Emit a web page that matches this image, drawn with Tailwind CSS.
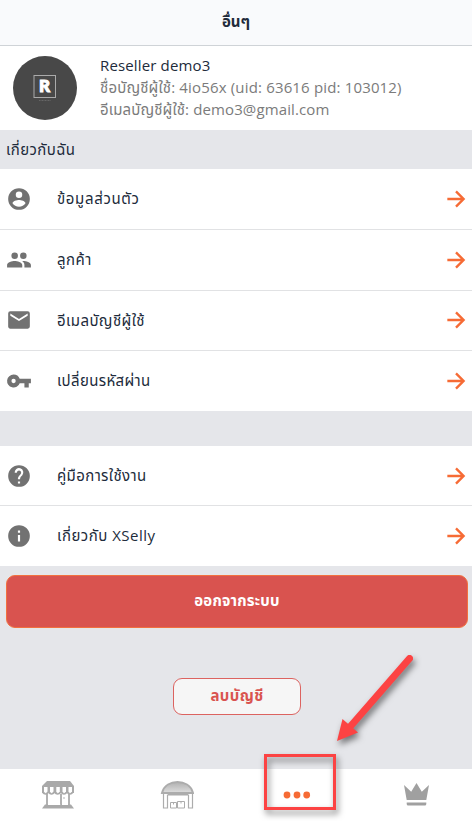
<!DOCTYPE html>
<html lang="th">
<head>
<meta charset="utf-8">
<title>อื่นๆ</title>
<script src="https://cdn.jsdelivr.net/npm/@tailwindcss/browser@4"></script>
</head>
<body class="relative flex h-[821px] w-[472px] flex-col overflow-hidden bg-[#e5e6ea] font-['Open_Sans','Noto_Sans_Thai','Noto_Sans',sans-serif] text-[15px] text-[#212b3b]">
<header class="flex h-[46px] shrink-0 items-center justify-center border-b border-[#cfd3d7] bg-[#f9fafc] pb-[2px] text-[15px] font-bold"><span>อื่นๆ</span></header>

<section class="flex h-[84px] shrink-0 items-center bg-white pl-[13px]">
  <svg class="size-16 shrink-0" viewBox="0 0 64 64"><circle cx="32" cy="32" r="32" fill="#484848"/><rect x="21" y="19.500" width="21.500" height="22" fill="none" stroke="#aaa"/><text x="26" y="36.300" font-family="Lato" font-weight="900" font-size="17" fill="#fff" stroke="#fff" stroke-width="1">R</text><path d="M26 44.500h12" stroke="#666" stroke-dasharray="1 .5"/></svg>
  <div class="ml-[23px] flex flex-col whitespace-nowrap pb-[2px] text-[15px] leading-[22px] text-[#7b7b7b]">
    <span class="tracking-[0.15px] text-[#212b3b]">Reseller demo3</span>
    <span class="tracking-[0.16px]">ชื่อบัญชีผู้ใช้: 4io56x (uid: 63616 pid: 103012)</span>
    <span class="tracking-[0.12px]">อีเมลบัญชีผู้ใช้: demo3@gmail.com</span>
  </div>
</section>

<h2 class="flex h-[39px] shrink-0 items-center pl-[6px] tracking-[0.4px]"><span>เกี่ยวกับฉัน</span></h2>

<ul class="flex h-[242px] shrink-0 flex-col divide-y divide-[#e1e2e4] bg-white">
  <li class="flex flex-1 items-center pl-[6px] pr-[3px]"><svg class="mr-[25px] size-[26px]" viewBox="0 0 24 24" fill="#727272"><path d="M12 2a10 10 0 1 0 0 20 10 10 0 0 0 0-20m0 3a3 3 0 1 1 0 6 3 3 0 0 1 0-6m0 14.200a7.200 7.200 0 0 1-6-3.220c.03-1.990 4-3.080 6-3.080s5.970 1.090 6 3.080a7.200 7.200 0 0 1-6 3.220"/></svg><span class="pb-px tracking-[0.65px]">ข้อมูลส่วนตัว</span><svg class="ml-auto size-[26px]" viewBox="0 0 24 24" fill="none" stroke="#f66b35" stroke-width="2.200"><path d="M4 12h15M12 5l7 7-7 7"/></svg></li>
  <li class="flex flex-1 items-center pl-[6px] pr-[3px]"><svg class="mr-[25px] size-[26px]" viewBox="0 0 24 24" fill="#727272"><path d="M16 11a3 3 0 1 0 0-6 3 3 0 0 0 0 6m-8 0a3 3 0 1 0 0-6 3 3 0 0 0 0 6m0 2c-2.330 0-7 1.170-7 3.500V19h14v-2.500C15 14.170 10.330 13 8 13m8 0c-.29 0-.62.020-.97.050 1.160.84 1.970 1.970 1.970 3.450V19h6v-2.500c0-2.330-4.670-3.500-7-3.500"/></svg><span class="pb-px tracking-[0.5px]">ลูกค้า</span><svg class="ml-auto size-[26px]" viewBox="0 0 24 24" fill="none" stroke="#f66b35" stroke-width="2.200"><path d="M4 12h15M12 5l7 7-7 7"/></svg></li>
  <li class="flex flex-1 items-center pl-[6px] pr-[3px]"><svg class="mr-[25px] size-[26px]" viewBox="0 0 24 24" fill="#727272"><path d="M20 4H4a2 2 0 0 0-2 2v12c0 1.100.9 2 2 2h16a2 2 0 0 0 2-2V6a2 2 0 0 0-2-2m0 4-8 5-8-5V6l8 5 8-5z"/></svg><span class="pb-px tracking-[0.4px]">อีเมลบัญชีผู้ใช้</span><svg class="ml-auto size-[26px]" viewBox="0 0 24 24" fill="none" stroke="#f66b35" stroke-width="2.200"><path d="M4 12h15M12 5l7 7-7 7"/></svg></li>
  <li class="flex flex-1 items-center pl-[6px] pr-[3px]"><svg class="mr-[25px] size-[26px]" viewBox="0 0 24 24" fill="#727272"><path d="M12.650 10A6 6 0 0 0 7 6a6 6 0 1 0 5.650 8H17v4h4v-4h2v-4zM7 14a2 2 0 1 1 0-4 2 2 0 0 1 0 4"/></svg><span class="pb-px tracking-[0.35px]">เปลี่ยนรหัสผ่าน</span><svg class="ml-auto size-[26px]" viewBox="0 0 24 24" fill="none" stroke="#f66b35" stroke-width="2.200"><path d="M4 12h15M12 5l7 7-7 7"/></svg></li>
</ul>

<ul class="mt-[35px] flex h-[120px] shrink-0 flex-col bg-white">
  <li class="flex h-[60px] items-center border-b border-[#e1e2e4] pl-[6px] pr-[3px]"><svg class="mr-[25px] size-[26px]" viewBox="0 0 24 24" fill="#727272"><path d="M12 2a10 10 0 1 0 0 20 10 10 0 0 0 0-20m1 17h-2v-2h2zm2.070-7.750-.9.920C13.450 12.900 13 13.500 13 15h-2v-.5c0-1.100.45-2.100 1.170-2.830l1.240-1.260A2 2 0 1 0 10 9H8a4 4 0 1 1 7.070 2.250"/></svg><span class="pb-px tracking-[0.4px]">คู่มือการใช้งาน</span><svg class="ml-auto size-[26px]" viewBox="0 0 24 24" fill="none" stroke="#f66b35" stroke-width="2.200"><path d="M4 12h15M12 5l7 7-7 7"/></svg></li>
  <li class="flex flex-1 items-center pl-[6px] pr-[3px]"><svg class="mr-[25px] size-[26px]" viewBox="0 0 24 24" fill="#727272"><path d="M12 2a10 10 0 1 0 0 20 10 10 0 0 0 0-20m1 15h-2v-6h2zm0-8h-2V7h2z"/></svg><span class="pb-px tracking-[0.5px]">เกี่ยวกับ XSelly</span><svg class="ml-auto size-[26px]" viewBox="0 0 24 24" fill="none" stroke="#f66b35" stroke-width="2.200"><path d="M4 12h15M12 5l7 7-7 7"/></svg></li>
</ul>

<button class="ml-[6px] mr-[4px] mt-[9px] h-[53px] shrink-0 rounded-[9px] border border-[#f2703f] bg-[#d9534f] pb-[3px] text-[15px] font-bold tracking-[0.2px] text-white"><span>ออกจากระบบ</span></button>
<button class="ml-[173px] mt-[50px] h-[37px] w-[128px] shrink-0 rounded-[9px] border border-[#dc6360] bg-[#f6f6f6] pb-[3px] text-[15px] font-bold tracking-[0.4px] text-[#d9534f]"><span>ลบบัญชี</span></button>

<nav class="mt-auto grid h-[52px] shrink-0 grid-cols-4 bg-white pt-[11px]">
  <svg class="ml-[41px] h-[30px] w-[34px]" viewBox="0 0 34 30" fill="none" stroke="#a9a9a9"><path d="M6 1h23l4 5v7H1V6z" fill="#a9a9a9" stroke="none"/><path d="M3 7h3.500v5q-1.800 2-3.500 0zM9 7h3.500v5q-1.800 2-3.500 0zM15.300 7h3.500v5q-1.800 2-3.500 0zM21.500 7H25v5q-1.800 2-3.500 0zM27.500 7H31v5q-1.800 2-3.500 0z" fill="#fff" stroke="none"/><path d="M1.500 12q3 4 6 0 3 4 6 0 3 4 6.500 0 3 4 6 0 3 4 6 0" stroke-width="1.700"/><path d="M6 14v11M20 14v11M28 14v11" stroke-width="1.800"/><path d="M4 24.500h26l3 4H1z" fill="#a9a9a9" stroke="none"/><path d="M7 24.500h12.200M21 24.500h6" stroke="#fff"/><circle cx="23" cy="18" r=".8" fill="#a9a9a9" stroke="none"/></svg>
  <svg class="ml-[42px] h-[30px] w-[34px]" viewBox="0 0 34 30" fill="none" stroke="#acacac"><defs><linearGradient id="roof" x2="0" y2="1"><stop stop-color="#b0b0b0"/><stop offset="1" stop-color="#dedede"/></linearGradient></defs><path d="M2 13C4 5 11 2 17.500 2S31 5 33 13z" fill="url(#roof)" stroke-width="2"/><path d="M3.500 13v15h4V15h21v13h4V13M8 14.500h20" stroke-width="1.200"/><path d="M10.500 22.500h6V28h-6zM17.500 21.500h7V28h-7zM13.500 22.500v2M21 21.500v2"/></svg>
  <svg class="ml-[46px] mt-[9px] h-[12px] w-[30px]" viewBox="0 0 30 12" fill="#f66b35"><circle cx="5" cy="6" r="3.400"/><circle cx="15" cy="6" r="3.400"/><circle cx="24.700" cy="6" r="3.400"/></svg>
  <svg class="ml-[49px] mt-[2px] h-[25px] w-[27px]" viewBox="0 0 27 25" fill="#a0a0a0"><path d="M1 3l7.200 6.700L13.500 1l5.300 8.700L26 3l-2.700 15H3.700zM3.700 20.500h19.600V22q0 1.500-1.500 1.500H5.200q-1.500 0-1.500-1.500z"/></svg>
</nav>

<svg class="pointer-events-none absolute inset-0 h-[821px] w-[472px] drop-shadow-[2px_4px_3px_rgb(0_0_0/0.5)]" viewBox="0 0 472 821">
  <rect x="265.500" y="755.500" width="69" height="53" fill="none" stroke="#fc4343" stroke-width="3"/>
  <path d="M409.500 658.500L349 728" stroke="#fc4343" stroke-width="7" stroke-linecap="round"/>
  <path d="M337 741l5.500-22L358 732.500z" fill="#fc4343"/>
</svg>
</body>
</html>
